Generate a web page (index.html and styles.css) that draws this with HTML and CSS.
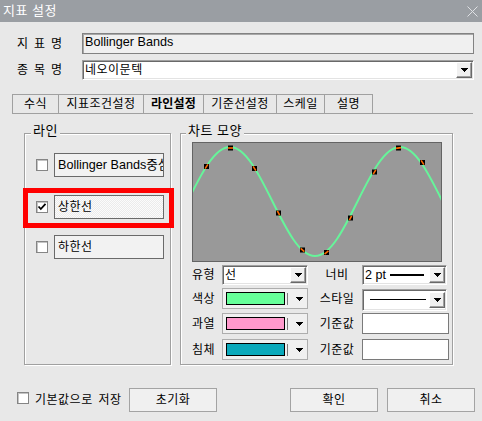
FILE: index.html
```html
<!DOCTYPE html>
<html lang="ko">
<head>
<meta charset="utf-8">
<title>지표 설정</title>
<link rel="stylesheet" href="styles.css">
</head>
<body>
<div class="dialog">
  <div class="titlebar">
    <span class="title">지표 설정</span>
    <svg class="close" width="11" height="11" viewBox="0 0 11 11"><path d="M0.5 0.5L10.5 10.5M10.5 0.5L0.5 10.5"/></svg>
  </div>

  <div class="field-row name-row">
    <div class="field-label"><span>지</span><span>표</span><span>명</span></div>
    <div class="readonly-box latin">Bollinger Bands</div>
  </div>
  <div class="field-row item-row">
    <div class="field-label"><span>종</span><span>목</span><span>명</span></div>
    <div class="combo combo-wide">
      <span class="combo-text">네오이문텍</span>
      <span class="drop-btn"><svg class="tri" width="7" height="4" viewBox="0 0 7 4"><path d="M0 0h7v1h-1v1h-1v1h-1v1h-1v-1h-1v-1h-1v-1h-1z"/></svg></span>
    </div>
  </div>

  <div class="tabs">
    <div class="tab tab-1">수식</div>
    <div class="tab tab-2">지표조건설정</div>
    <div class="tab tab-3 active">라인설정</div>
    <div class="tab tab-4">기준선설정</div>
    <div class="tab tab-5">스케일</div>
    <div class="tab tab-6">설명</div>
  </div>

  <div class="groups">
    <div class="group line-group">
      <span class="legend">라인</span>
      <div class="line-row">
        <span class="check"></span>
        <div class="line-box latin">Bollinger Bands중심선</div>
      </div>
      <div class="line-row row-2">
        <span class="check"><svg width="10" height="10" viewBox="0 0 10 10"><path class="tick" d="M1.5 4.5L3.8 7L8.5 1.8"/></svg></span>
        <div class="line-box selected">상한선</div>
      </div>
      <div class="line-row row-3">
        <span class="check"></span>
        <div class="line-box">하한선</div>
      </div>
      <div class="highlight"></div>
    </div>

    <div class="group chart-group">
      <span class="legend">차트 모양</span>
      <div class="chart">
        <svg width="248" height="118" viewBox="1 1 248 118">
          <path class="wave" d="M-4.5 59.5C9.36 31.58 22.62 5 38 5C53.38 5 66.64 31.58 80.5 59.5C94.36 87.42 107.62 114 123 114C138.38 114 151.64 87.42 165.5 59.5C179.36 31.58 192.62 5 208 5C223.38 5 236.64 31.58 250.5 59.5C264.36 87.42 277.62 114 293 114"/>
          <g class="mark" transform="translate(14.5 24.5)"><rect x="-2.5" y="-2.5" width="5" height="5"/><line x1="-2.5" y1="0" x2="2.5" y2="0" transform="rotate(-57)"/></g>
          <g class="mark" transform="translate(38.5 6)"><rect x="-2.5" y="-2.5" width="5" height="5"/><line x1="-2.5" y1="0" x2="2.5" y2="0"/></g>
          <g class="mark" transform="translate(62.5 26.5)"><rect x="-2.5" y="-2.5" width="5" height="5"/><line x1="-2.5" y1="0" x2="2.5" y2="0" transform="rotate(57)"/></g>
          <g class="mark" transform="translate(86.5 71)"><rect x="-2.5" y="-2.5" width="5" height="5"/><line x1="-2.5" y1="0" x2="2.5" y2="0" transform="rotate(63)"/></g>
          <g class="mark" transform="translate(110.5 108)"><rect x="-2.5" y="-2.5" width="5" height="5"/><line x1="-2.5" y1="0" x2="2.5" y2="0" transform="rotate(43)"/></g>
          <g class="mark" transform="translate(134.5 110.5)"><rect x="-2.5" y="-2.5" width="5" height="5"/><line x1="-2.5" y1="0" x2="2.5" y2="0" transform="rotate(-39)"/></g>
          <g class="mark" transform="translate(158.5 76)"><rect x="-2.5" y="-2.5" width="5" height="5"/><line x1="-2.5" y1="0" x2="2.5" y2="0" transform="rotate(-63)"/></g>
          <g class="mark" transform="translate(182.5 30)"><rect x="-2.5" y="-2.5" width="5" height="5"/><line x1="-2.5" y1="0" x2="2.5" y2="0" transform="rotate(-59)"/></g>
          <g class="mark" transform="translate(206.5 6)"><rect x="-2.5" y="-2.5" width="5" height="5"/><line x1="-2.5" y1="0" x2="2.5" y2="0" transform="rotate(-8)"/></g>
          <g class="mark" transform="translate(230.5 20.5)"><rect x="-2.5" y="-2.5" width="5" height="5"/><line x1="-2.5" y1="0" x2="2.5" y2="0" transform="rotate(56)"/></g>
        </svg>
      </div>

      <div class="ctrl-row crow-1">
        <span class="lbl1">유형</span>
        <div class="combo combo-small">
          <span class="combo-text">선</span>
          <span class="drop-btn"><svg class="tri" width="7" height="4" viewBox="0 0 7 4"><path d="M0 0h7v1h-1v1h-1v1h-1v1h-1v-1h-1v-1h-1v-1h-1z"/></svg></span>
        </div>
        <span class="lbl2">너비</span>
        <div class="combo combo-right">
          <span class="combo-text latin">2 pt</span>
          <span class="pt-line"></span>
          <span class="drop-btn"><svg class="tri" width="7" height="4" viewBox="0 0 7 4"><path d="M0 0h7v1h-1v1h-1v1h-1v1h-1v-1h-1v-1h-1v-1h-1z"/></svg></span>
        </div>
      </div>

      <div class="ctrl-row crow-2">
        <span class="lbl1">색상</span>
        <div class="color-btn">
          <span class="swatch swatch-green"></span>
          <span class="sep"></span>
          <svg class="tri arrow" width="7" height="4" viewBox="0 0 7 4"><path d="M0 0h7v1h-1v1h-1v1h-1v1h-1v-1h-1v-1h-1v-1h-1z"/></svg>
        </div>
        <span class="lbl2">스타일</span>
        <div class="combo combo-right combo-style">
          <span class="style-line"></span>
          <span class="drop-btn"><svg class="tri" width="7" height="4" viewBox="0 0 7 4"><path d="M0 0h7v1h-1v1h-1v1h-1v1h-1v-1h-1v-1h-1v-1h-1z"/></svg></span>
        </div>
      </div>

      <div class="ctrl-row crow-3">
        <span class="lbl1">과열</span>
        <div class="color-btn">
          <span class="swatch swatch-pink"></span>
          <span class="sep"></span>
          <svg class="tri arrow" width="7" height="4" viewBox="0 0 7 4"><path d="M0 0h7v1h-1v1h-1v1h-1v1h-1v-1h-1v-1h-1v-1h-1z"/></svg>
        </div>
        <span class="lbl2">기준값</span>
        <div class="value-input"></div>
      </div>

      <div class="ctrl-row crow-4">
        <span class="lbl1">침체</span>
        <div class="color-btn">
          <span class="swatch swatch-teal"></span>
          <span class="sep"></span>
          <svg class="tri arrow" width="7" height="4" viewBox="0 0 7 4"><path d="M0 0h7v1h-1v1h-1v1h-1v1h-1v-1h-1v-1h-1v-1h-1z"/></svg>
        </div>
        <span class="lbl2">기준값</span>
        <div class="value-input"></div>
      </div>
    </div>
  </div>

  <div class="bottom-bar">
    <span class="check bottom-check"></span>
    <span class="save-label">기본값으로 저장</span>
    <div class="btn btn-reset">초기화</div>
    <div class="btn btn-ok">확인</div>
    <div class="btn btn-cancel">취소</div>
  </div>
</div>
</body>
</html>
```

FILE: styles.css
```css
* { box-sizing: border-box; }
html, body { margin: 0; padding: 0; }
body {
  width: 482px;
  height: 421px;
  overflow: hidden;
  background: #e8e8e8;
  font-family: "Liberation Sans", "Noto Sans CJK KR", sans-serif;
  font-size: 12px;
  line-height: 14px;
  letter-spacing: 0.5px;
  color: #000;
}
.latin { font-size: 12.6px; letter-spacing: 0; }

.dialog {
  width: 482px;
  height: 421px;
  display: flex;
  flex-direction: column;
}

/* title bar */
.titlebar {
  flex: none;
  height: 22px;
  background: #9a9ea3;
  display: flex;
  align-items: center;
  justify-content: space-between;
  padding: 0 4px 0 3px;
}
.title { color: #fff; font-size: 13px; line-height: 16px; }
.close path { stroke: #dfe1e4; stroke-width: 1; fill: none; }

/* top fields */
.field-row {
  flex: none;
  display: flex;
  margin-left: 17px;
}
.name-row { margin-top: 11px; height: 21px; }
.item-row { margin-top: 6px; height: 20px; }
.field-label {
  flex: none;
  width: 65px;
  padding-right: 20px;
  display: flex;
  align-items: center;
  justify-content: space-between;
  letter-spacing: 0;
}
.readonly-box {
  width: 392px;
  height: 21px;
  background: #f0f0f0;
  border: 1px solid #828282;
  box-shadow: inset 1px 1px 0 #a8a8a8;
  padding: 1px 0 0 2px;
}

/* combos */
.combo {
  display: flex;
  align-items: center;
  background: #fff;
  border: 1px solid;
  border-color: #a0a0a0 #ffffff #ffffff #a0a0a0;
  box-shadow: inset 1px 1px 0 #696969, inset -1px -1px 0 #e3e3e3;
  padding: 1px;
}
.combo-wide { width: 392px; height: 20px; }
.combo-text { padding-left: 1px; }
.drop-btn {
  margin-left: auto;
  flex: none;
  width: 16px;
  height: 16px;
  background: #f0f0f0;
  border: 1px solid;
  border-color: #ffffff #696969 #696969 #ffffff;
  box-shadow: inset -1px -1px 0 #a0a0a0;
  display: flex;
  align-items: center;
  justify-content: center;
}
.tri { display: block; }
.tri path { fill: #000; }

/* tabs */
.tabs {
  flex: none;
  display: flex;
  margin: 14px 0 0 12px;
  width: 461px;
  height: 20px;
  border-bottom: 1px solid #a0a0a0;
}
.tab {
  height: 19px;
  border: 1px solid #a0a0a0;
  border-bottom: none;
  display: flex;
  align-items: center;
  justify-content: center;
  background: #e8e8e8;
}
.tab + .tab { margin-left: -1px; }
.tab-1 { width: 47px; }
.tab-2 { width: 86px; }
.tab-3 { width: 61px; }
.tab-4 { width: 74px; }
.tab-5 { width: 49px; }
.tab-6 { width: 49px; }
.tab.active { font-weight: bold; letter-spacing: 0.2px; }

/* groups */
.groups {
  flex: none;
  display: flex;
  margin: 19px 0 0 24px;
  height: 232px;
}
.group {
  position: relative;
  height: 232px;
  border: 1px solid #a0a0a0;
  box-shadow: 1px 1px 0 #ffffff, inset 1px 1px 0 #ffffff;
}
.legend {
  position: absolute;
  top: -11px;
  padding: 0 2px;
  background: #e8e8e8;
  font-size: 13px;
  line-height: 16px;
}
.line-group {
  width: 147px;
  padding: 19px 0 0 11px;
}
.line-group .legend { left: 6px; }
.chart-group {
  width: 273px;
  margin-left: 9px;
  padding: 8px 0 0 11px;
}
.chart-group .legend { left: 5px; }

/* line list */
.line-row {
  display: flex;
  align-items: center;
  gap: 6px;
  height: 24px;
}
.row-2 { margin-top: 18px; }
.row-3 { margin-top: 16px; }
.check {
  flex: none;
  width: 12px;
  height: 12px;
  background: #fff;
  border: 1px solid #858585;
  box-shadow: inset 1px 1px 0 #c4c4c4;
  display: flex;
  align-items: center;
  justify-content: center;
}
.check svg { display: block; }
.tick { fill: none; stroke: #000; stroke-width: 1.8; }
.line-box {
  flex: none;
  width: 110px;
  height: 24px;
  background: #f2f2f2;
  border: 1px solid #6a6a6a;
  padding-left: 3px;
  display: flex;
  align-items: center;
  white-space: nowrap;
  overflow: hidden;
}
.line-box.selected {
  background-color: #f4f4f4;
  background-image: repeating-conic-gradient(#fbfbfb 0 25%, #ebebeb 0 50%);
  background-size: 2px 2px;
}
.highlight {
  position: absolute;
  left: -2px;
  top: 54px;
  width: 151px;
  height: 40px;
  border: 5px solid #ff0000;
}

/* chart */
.chart {
  width: 250px;
  height: 120px;
  border: 1px solid #646464;
  background: #999999;
  overflow: hidden;
}
.chart svg { display: block; }
.wave { fill: none; stroke: #66f59a; stroke-width: 2; }
.mark rect { fill: #000; }
.mark line { stroke: #ff6a00; stroke-width: 1.6; }

/* control rows */
.ctrl-row {
  display: flex;
  align-items: center;
  height: 21px;
}
.crow-1 { margin-top: 3px; height: 20px; }
.crow-2 { margin-top: 3px; }
.crow-3 { margin-top: 4px; }
.crow-4 { margin-top: 5px; }
.lbl1 { flex: none; width: 30px; }
.lbl2 { flex: none; width: 54px; padding-left: 4px; text-align: center; }
.combo-small { flex: none; width: 86px; height: 20px; }
.combo-right { flex: none; width: 85px; height: 20px; }
.combo-style { height: 22px; margin-top: 2px; }
.pt-line {
  flex: none;
  width: 34px;
  height: 2px;
  background: #000;
  margin-left: 4px;
}
.style-line {
  flex: none;
  width: 56px;
  height: 1px;
  background: #000;
  margin-left: 6px;
}
.color-btn {
  flex: none;
  width: 86px;
  height: 21px;
  background: #f0f0f0;
  border: 1px solid #adadad;
  display: flex;
  align-items: center;
  padding-left: 3px;
}
.swatch {
  flex: none;
  width: 59px;
  height: 13px;
  border: 1px solid #000;
}
.swatch-green { background: #66ff99; }
.swatch-pink { background: #ff99cc; }
.swatch-teal { background: #0aa9bb; }
.sep {
  flex: none;
  width: 1px;
  height: 12px;
  background: #7a7a7a;
  margin-left: 2px;
}
.arrow { margin-left: 8px; }
.value-input {
  flex: none;
  width: 87px;
  height: 21px;
  background: #fff;
  border: 1px solid #7a7a7a;
}

/* bottom bar */
.bottom-bar {
  flex: none;
  display: flex;
  align-items: center;
  margin-top: 23px;
  height: 24px;
  padding-left: 17px;
}
.bottom-check { align-self: flex-start; margin-top: 4px; }
.save-label { flex: none; width: 87px; margin-left: 6px; white-space: nowrap; word-spacing: 2px; }
.btn {
  flex: none;
  width: 88px;
  height: 24px;
  background: #f0f0f0;
  border: 1px solid #a3a3a3;
  display: flex;
  align-items: center;
  justify-content: center;
}
.btn-reset { margin-left: 7px; }
.btn-ok { margin-left: 73px; }
.btn-cancel { margin-left: 9px; }
```
